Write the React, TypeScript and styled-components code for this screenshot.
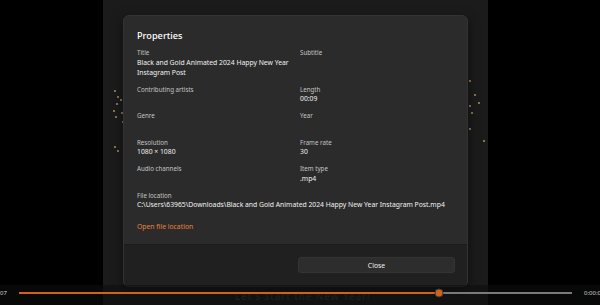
import React from 'react';
import styled, { createGlobalStyle } from 'styled-components';

const GlobalStyle = createGlobalStyle`
  html, body {
    margin: 0;
    padding: 0;
    background: #000000;
  }
  body {
    font-family: "Noto Sans", "Open Sans", sans-serif;
    -webkit-font-smoothing: antialiased;
  }
`;

const Screen = styled.div`
  position: relative;
  width: 600px;
  height: 305px;
  overflow: hidden;
  background: #000000;
  display: flex;
  justify-content: flex-start;
`;

const Video = styled.div`
  position: relative;
  margin-left: 103px;
  width: 385px;
  height: 100%;
  background: #1b1b1b;
`;

const Sparkle = styled.span<{ $x: number; $y: number; $size?: number }>`
  position: absolute;
  left: ${(p) => p.$x}px;
  top: ${(p) => p.$y}px;
  width: ${(p) => p.$size ?? 1.5}px;
  height: ${(p) => p.$size ?? 1.5}px;
  border-radius: 50%;
  background: #b89a5a;
  opacity: 0.85;
`;

const Caption = styled.div`
  position: absolute;
  left: 132px;
  top: 289px;
  font-size: 10px;
  letter-spacing: 0.9px;
  color: #404040;
  white-space: nowrap;
`;

const Dialog = styled.div`
  position: absolute;
  left: 20px;
  top: 15px;
  width: 345px;
  height: 272px;
  border-radius: 6px;
  background: #2b2b2b;
  border: 1px solid #333333;
  box-sizing: border-box;
  display: flex;
  flex-direction: column;
  overflow: hidden;
  box-shadow: 0 4px 12px rgba(0, 0, 0, 0.5);
`;

const Body = styled.div`
  flex: 1;
  padding: 13px 13px 0 13px;
`;

const Heading = styled.div`
  font-size: 9.2px;
  font-weight: 500;
  color: #ffffff;
  line-height: 14px;
  margin-bottom: 5px;
`;

const Grid = styled.div`
  display: grid;
  grid-template-columns: 163px 1fr;
  row-gap: 7px;
`;

const Field = styled.div<{ $span?: boolean }>`
  grid-column: ${(p) => (p.$span ? '1 / span 2' : 'auto')};
  display: flex;
  flex-direction: column;
`;

const Label = styled.div`
  font-size: 6.2px;
  line-height: 9.5px;
  color: #c4c4c4;
`;

const Value = styled.div`
  font-size: 6.8px;
  line-height: 10px;
  min-height: 10px;
  color: #f2f2f2;
  white-space: pre;
`;

const Link = styled.div`
  margin-top: 12px;
  font-size: 6.8px;
  line-height: 10px;
  color: #e9823c;
`;

const Footer = styled.div`
  height: 42px;
  background: #202020;
  border-top: 1px solid #1c1c1c;
  box-sizing: border-box;
  display: grid;
  grid-template-columns: 1fr 157px;
  padding: 12px 12px 0 12px;
`;

const Button = styled.div`
  grid-column: 2;
  height: 16px;
  border-radius: 3px;
  background: #2d2d2d;
  border: 1px solid #343434;
  box-sizing: border-box;
  display: flex;
  align-items: center;
  justify-content: center;
  font-size: 6.8px;
  color: #f2f2f2;
`;

const Controls = styled.div`
  position: absolute;
  left: 0;
  right: 0;
  bottom: 0;
  height: 20px;
  background: rgba(14, 14, 14, 0.6);
  display: flex;
  align-items: center;
  font-size: 6px;
  color: #cfcfcf;
`;

const Time = styled.span<{ $right?: boolean }>`
  flex-shrink: 0;
  width: ${(p) => (p.$right ? 'auto' : '19px')};
  margin-left: ${(p) => (p.$right ? '12px' : '0')};
  margin-top: -5px;
  white-space: nowrap;
`;

const Track = styled.div`
  position: relative;
  flex-shrink: 0;
  width: 553px;
  height: 2px;
  margin-top: -5px;
  background: #7a7a7a;
`;

const Fill = styled.div`
  height: 100%;
  background: #d1621c;
`;

const Thumb = styled.div`
  position: absolute;
  top: 50%;
  width: 7px;
  height: 7px;
  border-radius: 50%;
  background: #d1621c;
  border: 1.5px solid #3a3a3a;
  transform: translate(-50%, -50%);
`;

const sparkles = [
  { x: 11, y: 90 }, { x: 14, y: 96 }, { x: 17, y: 99 }, { x: 13, y: 103 },
  { x: 10, y: 110 }, { x: 18, y: 112 }, { x: 12, y: 116 }, { x: 19, y: 121 },
  { x: 11, y: 146 }, { x: 14, y: 150 },
  { x: 366, y: 80 }, { x: 366, y: 105 }, { x: 368, y: 112 }, { x: 375, y: 102 },
  { x: 366, y: 128 }, { x: 380, y: 140 }, { x: 371, y: 94 },
];

const progress = (439 - 19) / 553;

export default function App() {
  return (
    <>
      <GlobalStyle />
      <Screen>
        <Video>
          {sparkles.map((s, i) => (
            <Sparkle key={i} $x={s.x} $y={s.y} />
          ))}
          <Caption>Let's start the New Year!</Caption>
          <Dialog>
            <Body>
              <Heading>Properties</Heading>
              <Grid>
                <Field>
                  <Label>Title</Label>
                  <Value>{'Black and Gold Animated 2024 Happy New Year\nInstagram Post'}</Value>
                </Field>
                <Field>
                  <Label>Subtitle</Label>
                  <Value />
                </Field>
                <Field>
                  <Label>Contributing artists</Label>
                  <Value />
                </Field>
                <Field>
                  <Label>Length</Label>
                  <Value>00:09</Value>
                </Field>
                <Field>
                  <Label>Genre</Label>
                  <Value />
                </Field>
                <Field>
                  <Label>Year</Label>
                  <Value />
                </Field>
                <Field>
                  <Label>Resolution</Label>
                  <Value>1080 × 1080</Value>
                </Field>
                <Field>
                  <Label>Frame rate</Label>
                  <Value>30</Value>
                </Field>
                <Field>
                  <Label>Audio channels</Label>
                  <Value />
                </Field>
                <Field>
                  <Label>Item type</Label>
                  <Value>.mp4</Value>
                </Field>
                <Field $span>
                  <Label>File location</Label>
                  <Value>C:\Users\63965\Downloads\Black and Gold Animated 2024 Happy New Year Instagram Post.mp4</Value>
                </Field>
              </Grid>
              <Link>Open file location</Link>
            </Body>
            <Footer>
              <Button>Close</Button>
            </Footer>
          </Dialog>
        </Video>
        <Controls>
          <Time>07</Time>
          <Track>
            <Fill style={{ width: `${progress * 100}%` }} />
            <Thumb style={{ left: `${progress * 100}%` }} />
          </Track>
          <Time $right>0:00:09</Time>
        </Controls>
      </Screen>
    </>
  );
}
